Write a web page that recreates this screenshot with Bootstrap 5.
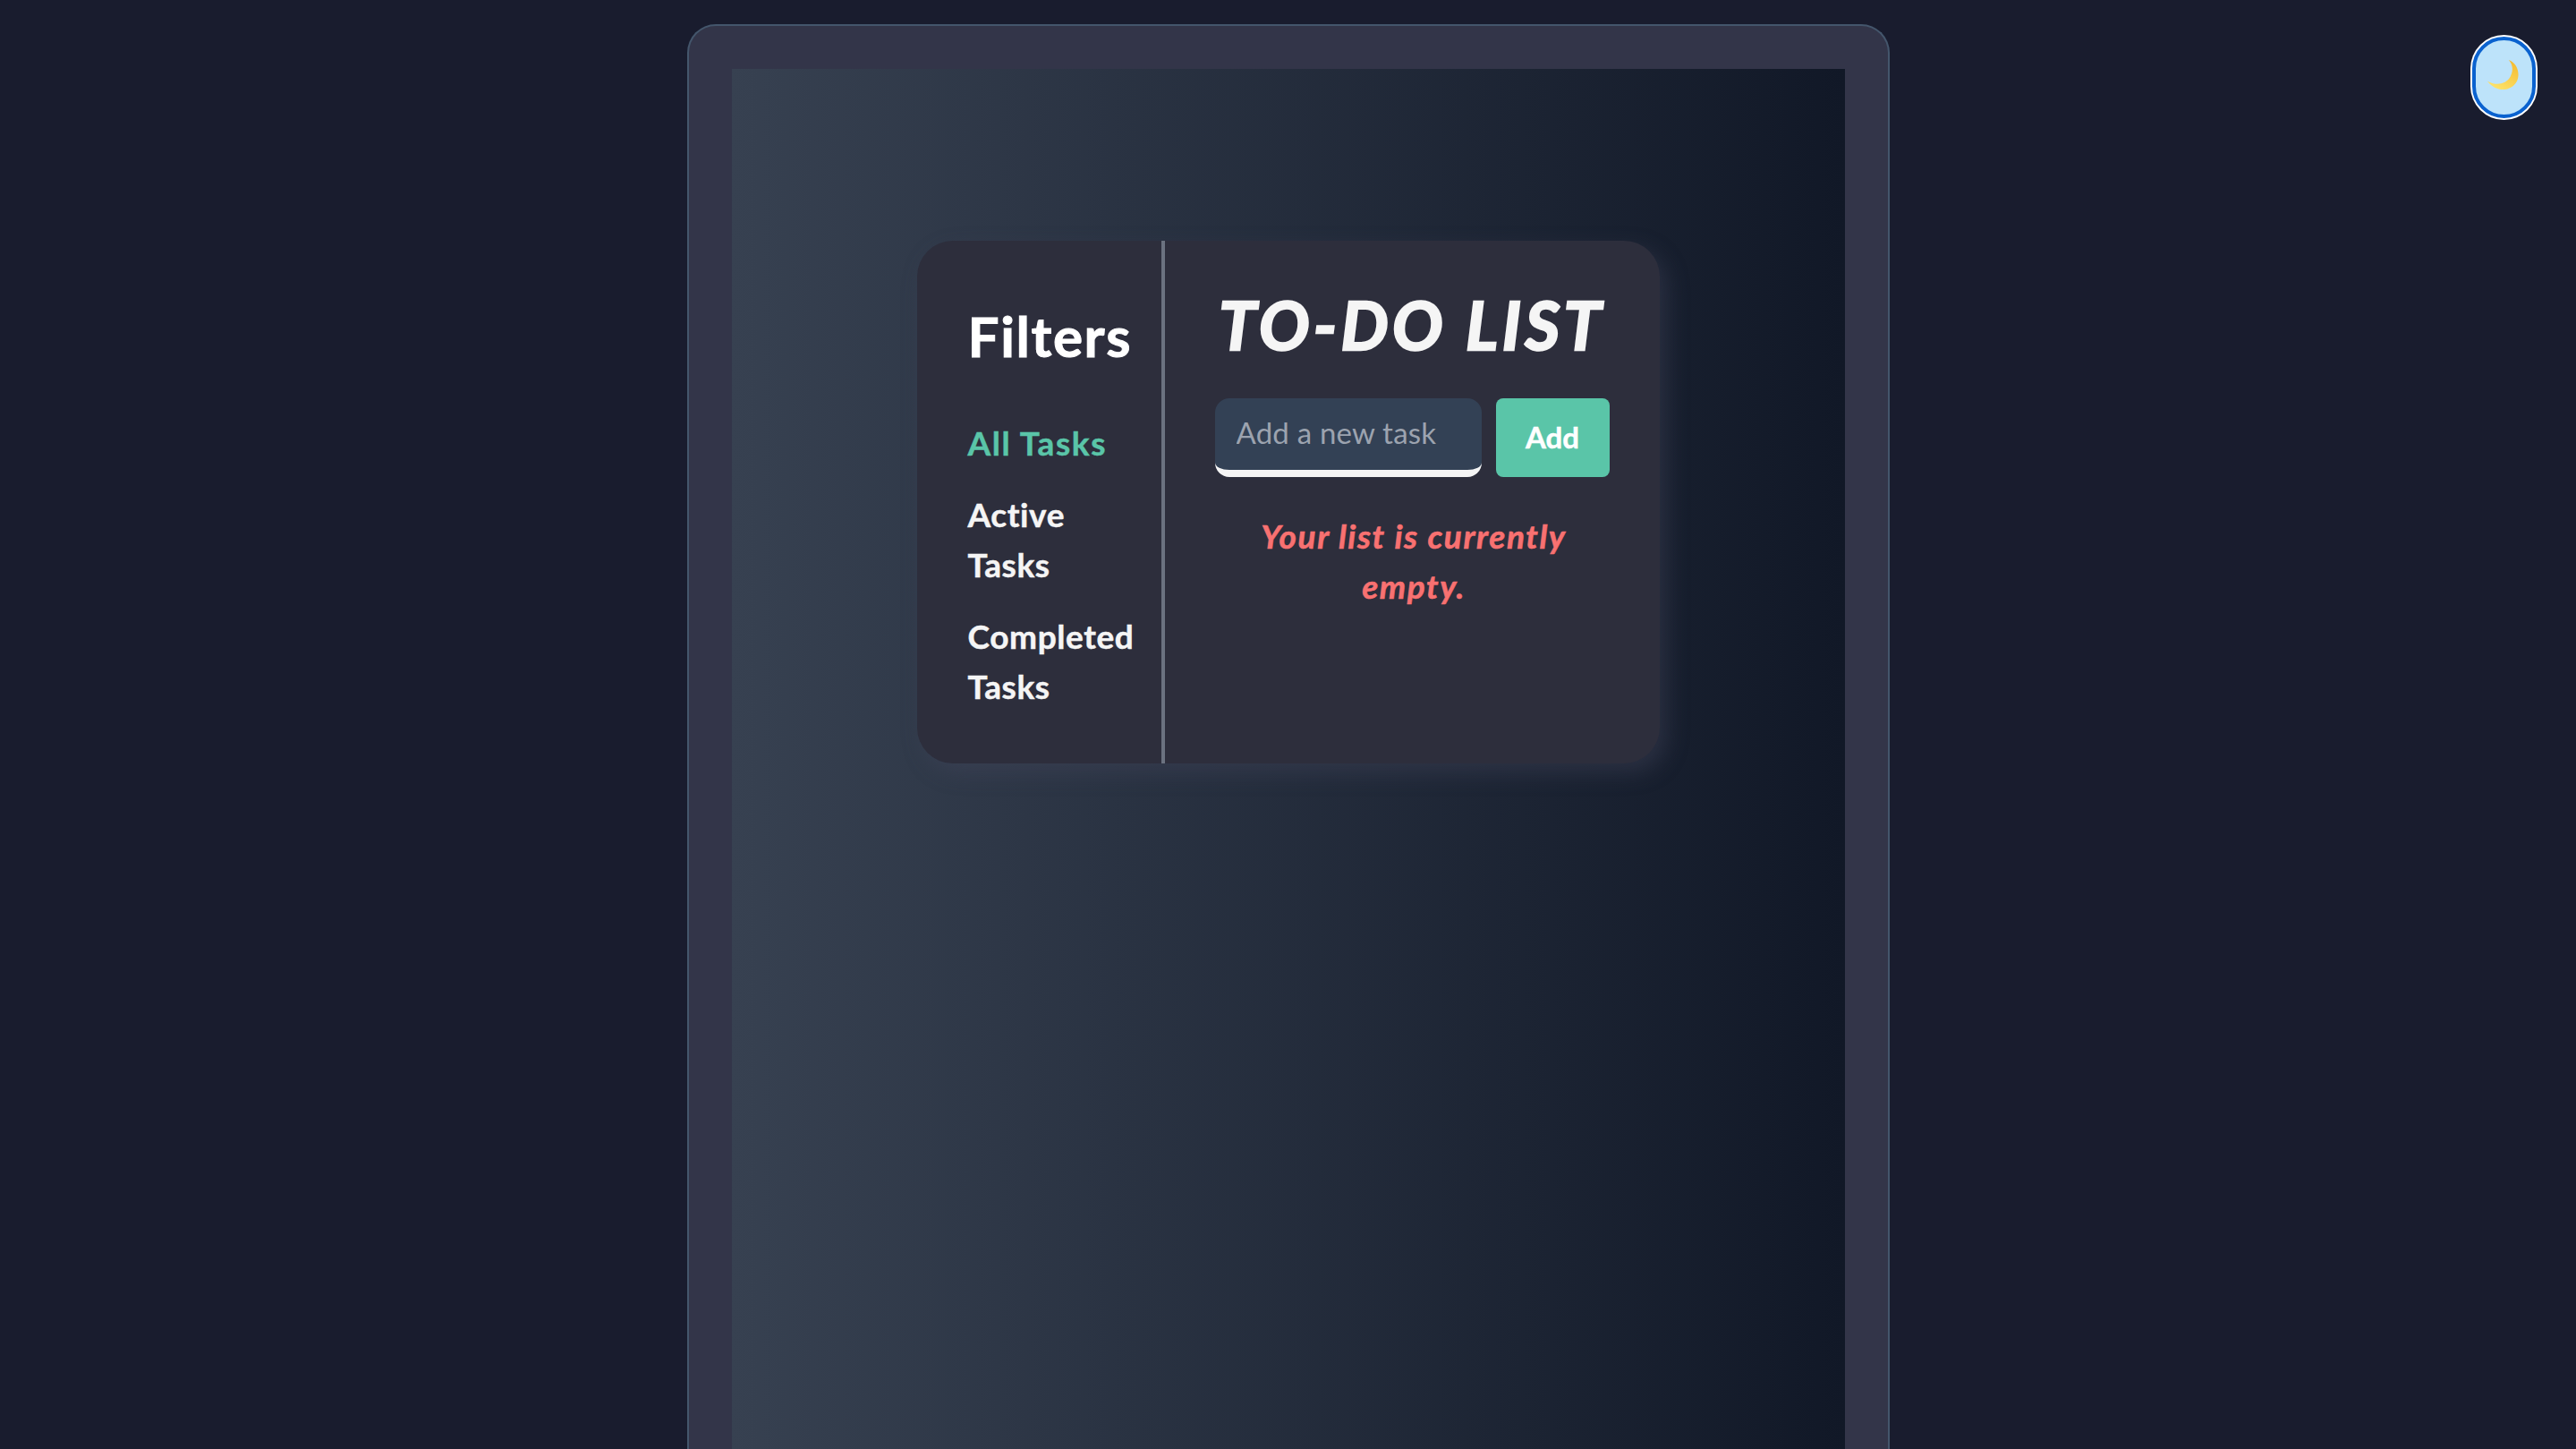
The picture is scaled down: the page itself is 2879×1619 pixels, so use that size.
<!DOCTYPE html>
<html lang="en">
<head>
    <meta charset="UTF-8">
    <meta name="viewport" content="width=device-width, initial-scale=1.0">
    <title>To-Do List</title>
    <link href="https://cdn.jsdelivr.net/npm/bootstrap@5.3.0/dist/css/bootstrap.min.css" rel="stylesheet">
    <style>
        body {
            background: #191c2e;
            font-family: "Lato", "Open Sans", sans-serif;
            padding-top: 27px;
            height: 1619px;
            overflow: hidden;
        }

        .page-frame {
            width: 1344px;
            height: 1592px;
            margin: 0 auto;
            padding: 48px 48px 0;
            background: #333549;
            border: 2px solid #44566c;
            border-bottom: 0;
            border-radius: 32px 32px 0 0;
        }

        .page-inner {
            height: 100%;
            padding-top: 192px;
            background: linear-gradient(90deg, #374151, #111827);
        }

        .todo-card {
            width: 830px;
            height: 584px;
            background: #2d2e3c;
            border-radius: 40px;
            box-shadow: 8px 10px 25px rgba(70, 72, 96, 0.4);
        }

        .side-col {
            width: 277px;
            padding: 68px 0 0 57px;
            border-right: 4px solid #6b7280;
        }

        .side-title {
            font-size: 62px;
            font-weight: 700;
            line-height: 1.25;
            letter-spacing: 1.6px;
            -webkit-text-stroke: 1px #fff;
            color: #fff;
            margin-bottom: 52px;
        }

        .side-link {
            display: block;
            font-size: 37px;
            font-weight: 700;
            line-height: 56px;
            letter-spacing: .6px;
            -webkit-text-stroke: .5px currentColor;
            margin-bottom: 24px;
            color: #f5f5f5;
            text-decoration: none;
            width: 190px;
        }

        .side-link.is-on {
            color: #5ac5a8;
            letter-spacing: 1.6px;
        }

        .main-col {
            padding: 56px 56px 0;
        }

        .todo-title {
            font-size: 75px;
            font-weight: 700;
            font-style: italic;
            line-height: 1;
            letter-spacing: 4.5px;
            -webkit-text-stroke: 2.5px #f5f5f5;
            color: #f5f5f5;
            text-align: center;
            white-space: nowrap;
            margin-bottom: 45px;
        }

        .task-input {
            width: 298px;
            height: 88px;
            padding: 0 24px 4px;
            font-size: 33px;
            letter-spacing: .2px;
            color: #fff;
            background: #334155;
            border: 0;
            border-bottom: 8px solid #f5f5f5;
            border-radius: 16px;
            outline: none;
        }

        .task-input::placeholder {
            color: #9ca3af;
        }

        .add-btn {
            width: 127px;
            height: 88px;
            padding: 0;
            font-size: 33px;
            font-weight: 700;
            -webkit-text-stroke: .5px #fff;
            color: #fff;
            background: #5ac5a8;
            border: 0;
            border-radius: 8px;
        }

        .empty-note {
            font-size: 37px;
            font-weight: 700;
            font-style: italic;
            line-height: 56px;
            letter-spacing: 1.6px;
            -webkit-text-stroke: .6px #f87171;
            color: #f87171;
            text-align: center;
            margin: 38px 18px 0 22px;
        }

        .theme-btn {
            position: fixed;
            top: 41px;
            left: 2763px;
            width: 71px;
            height: 91px;
            padding: 0 2px 4px 0;
            background: #bde3fa;
            border: 4px solid #0a62cf;
            border-radius: 36px;
            box-shadow: 0 0 0 2px #fff;
        }
    </style>
</head>
<body>
    <button type="button" class="theme-btn d-flex align-items-center justify-content-center" aria-label="Toggle theme">
        <svg width="35" height="35" viewBox="0 0 34 34">
            <defs>
                <linearGradient id="moonFill" x1="0.9" y1="0" x2="0.3" y2="1">
                    <stop offset="0" stop-color="#f4b92f"/>
                    <stop offset="1" stop-color="#fde36a"/>
                </linearGradient>
            </defs>
            <path d="M23 0C32 3 36 14 32 23C27 33 11 37 0 23C9 28 20 27 25 18C28 12 28 5 23 0Z" fill="url(#moonFill)"/>
        </svg>
    </button>

    <div class="page-frame">
        <div class="page-inner">
            <div class="todo-card d-flex mx-auto">
                <aside class="side-col flex-shrink-0">
                    <h2 class="side-title">Filters</h2>
                    <a href="#" class="side-link is-on">All Tasks</a>
                    <a href="#" class="side-link">Active Tasks</a>
                    <a href="#" class="side-link">Completed Tasks</a>
                </aside>
                <main class="main-col flex-grow-1">
                    <h1 class="todo-title">TO-DO LIST</h1>
                    <form class="d-flex gap-3">
                        <input type="text" class="task-input" placeholder="Add a new task">
                        <button type="button" class="add-btn">Add</button>
                    </form>
                    <p class="empty-note">Your list is currently empty.</p>
                </main>
            </div>
        </div>
    </div>

    <script src="https://cdn.jsdelivr.net/npm/bootstrap@5.3.0/dist/js/bootstrap.bundle.min.js"></script>
</body>
</html>
